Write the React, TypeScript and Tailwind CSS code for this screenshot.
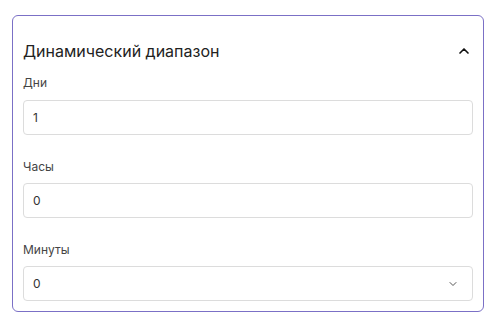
import React from 'react';
import { ChevronUp, ChevronDown } from 'lucide-react';

const FIELDS = [
    { label: 'Дни', value: '1', gap: 'mt-[9px]' },
    { label: 'Часы', value: '0', gap: 'mt-[8px]' },
];

export default function App() {
    return (
        <div className="w-[494px] h-[326px] bg-white pt-[15px] pl-[12px] font-['Inter',sans-serif]">
            <div className="w-[472px] border border-[#7b70c6] rounded-[6px] px-[10px] pt-[23px] pb-[10px]">
                <div className="flex items-center justify-between h-[24px]">
                    <h3 className="text-[16px] text-[#222] leading-6">Динамический диапазон</h3>
                    <ChevronUp size={16} strokeWidth={2.5} className="text-[#111] mr-[1px]" />
                </div>

                <div className="mt-[12px] flex flex-col gap-[24px]">
                    {FIELDS.map((f) => (
                        <div key={f.label}>
                            <div className="text-[12px] leading-4 text-[#444]">{f.label}</div>
                            <div className={`${f.gap} h-[35px] border border-[#dcdcdc] rounded-[4px] flex items-center px-[9px] text-[12px] text-[#333]`}>
                                {f.value}
                            </div>
                        </div>
                    ))}
                    <div>
                        <div className="text-[12px] leading-4 text-[#444]">Минуты</div>
                        <div className="mt-[8px] h-[35px] border border-[#dcdcdc] rounded-[4px] flex items-center justify-between px-[9px] text-[12px] text-[#333]">
                            <span>0</span>
                            <ChevronDown size={12} strokeWidth={2} className="text-[#555] mr-[4px]" />
                        </div>
                    </div>
                </div>
            </div>
        </div>
    );
}
